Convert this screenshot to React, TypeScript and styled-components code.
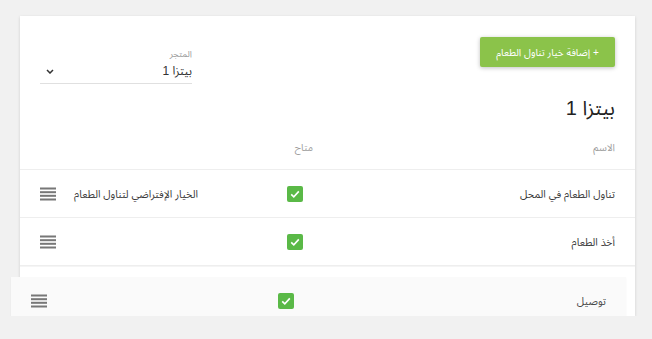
import React from 'react';
import styled, { createGlobalStyle } from 'styled-components';

const GlobalStyle = createGlobalStyle`
  html, body {
    margin: 0;
    padding: 0;
    background: #f1f1f1;
    font-family: 'Liberation Sans', 'Noto Sans Arabic', 'DejaVu Sans', sans-serif;
  }
`;

const Page = styled.div`
  padding: 16px 0 0 20px;
`;

const Card = styled.div`
  position: relative;
  direction: rtl;
  width: 615px;
  height: 300px;
  box-sizing: border-box;
  padding-top: 21px;
  background: #fff;
  box-shadow: 0 1px 3px rgba(0, 0, 0, 0.14);
`;

const TopBar = styled.div`
  display: flex;
  justify-content: space-between;
  align-items: flex-start;
  padding: 0 20px;
`;

const AddButton = styled.button`
  height: 30px;
  width: 135px;
  border: none;
  border-radius: 2px;
  background: #8bc34a;
  color: #fff;
  font-family: inherit;
  font-size: 10px;
  cursor: pointer;
  box-shadow: 0 1px 4px rgba(0, 0, 0, 0.25);
`;

const StoreSelect = styled.div`
  width: 152px;
  margin-top: 11px;
  border-bottom: 1px solid #e0e0e0;
`;

const SelectLabel = styled.div`
  font-size: 9px;
  line-height: 12px;
  color: #9e9e9e;
`;

const SelectValue = styled.div`
  display: flex;
  justify-content: space-between;
  align-items: center;
  height: 23px;
  font-size: 12px;
  color: #333;
  padding-left: 6px;
`;

const Title = styled.h2`
  margin: 12px 0 0;
  padding: 0 20px;
  font-size: 20px;
  line-height: 24px;
  font-weight: normal;
  color: #222;
`;

const Row = styled.div<{ $header?: boolean }>`
  display: grid;
  grid-template-columns: 302px 115px 1fr 16px;
  align-items: ${(p) => (p.$header ? 'end' : 'center')};
  height: ${(p) => (p.$header ? '50px' : '48px')};
  box-sizing: border-box;
  padding: ${(p) => (p.$header ? '0 20px 15px' : '0 20px')};
  border-bottom: 1px solid #eeeeee;
  font-size: ${(p) => (p.$header ? '10px' : '10.5px')};
  line-height: 12px;
  color: ${(p) => (p.$header ? '#9e9e9e' : '#3a3a3a')};
`;

const Placeholder = styled.div`
  height: 48px;
  border-top: 1px solid #f5f5f5;
`;

const DraggedRow = styled(Row)`
  position: absolute;
  top: 261px;
  right: 9px;
  width: 615px;
  background: #fafafa;
  border-bottom: none;
  color: #4a4a4a;
  box-shadow: 0 1px 2px rgba(0, 0, 0, 0.04);
`;

const CheckCell = styled.div`
  display: flex;
  padding-right: 10px;
`;

const CheckBox = styled.span`
  display: inline-flex;
  align-items: center;
  justify-content: center;
  width: 16px;
  height: 16px;
  border-radius: 2px;
  background: #5ab947;
`;

const HandleCell = styled.div`
  display: flex;
  align-items: center;
  cursor: grab;
`;

const Check = () => (
  <CheckBox>
    <svg width="12" height="12" viewBox="0 0 12 12">
      <path d="M2.2 6.3 L4.8 8.8 L9.8 3.4" fill="none" stroke="#fff" strokeWidth="1.6" />
    </svg>
  </CheckBox>
);

const Handle = () => (
  <HandleCell>
    <svg width="16" height="14" viewBox="0 0 16 14">
      {[0.5, 4.2, 7.8, 11.5].map((y) => (
        <rect key={y} x="0" y={y} width="16" height="2" fill="#777" />
      ))}
    </svg>
  </HandleCell>
);

const rows = [
  { name: 'تناول الطعام في المحل', note: 'الخيار الإفتراضي لتناول الطعام' },
  { name: 'أخذ الطعام', note: '' },
];

export default function App() {
  return (
    <Page>
      <GlobalStyle />
      <Card>
        <TopBar>
          <AddButton>+ إضافة خيار تناول الطعام</AddButton>
          <StoreSelect>
            <SelectLabel>المتجر</SelectLabel>
            <SelectValue>
              <span>بيتزا 1</span>
              <svg width="8" height="5" viewBox="0 0 8 5">
                <path d="M1 1 L4 4 L7 1" fill="none" stroke="#333" strokeWidth="1.5" />
              </svg>
            </SelectValue>
          </StoreSelect>
        </TopBar>
        <Title>بيتزا 1</Title>
        <Row $header>
          <div>الاسم</div>
          <div>متاح</div>
          <div />
          <div />
        </Row>
        {rows.map((r) => (
          <Row key={r.name}>
            <div>{r.name}</div>
            <CheckCell>
              <Check />
            </CheckCell>
            <div>{r.note}</div>
            <Handle />
          </Row>
        ))}
        <Placeholder />
        <DraggedRow>
          <div>توصيل</div>
          <CheckCell>
            <Check />
          </CheckCell>
          <div />
          <Handle />
        </DraggedRow>
      </Card>
    </Page>
  );
}
